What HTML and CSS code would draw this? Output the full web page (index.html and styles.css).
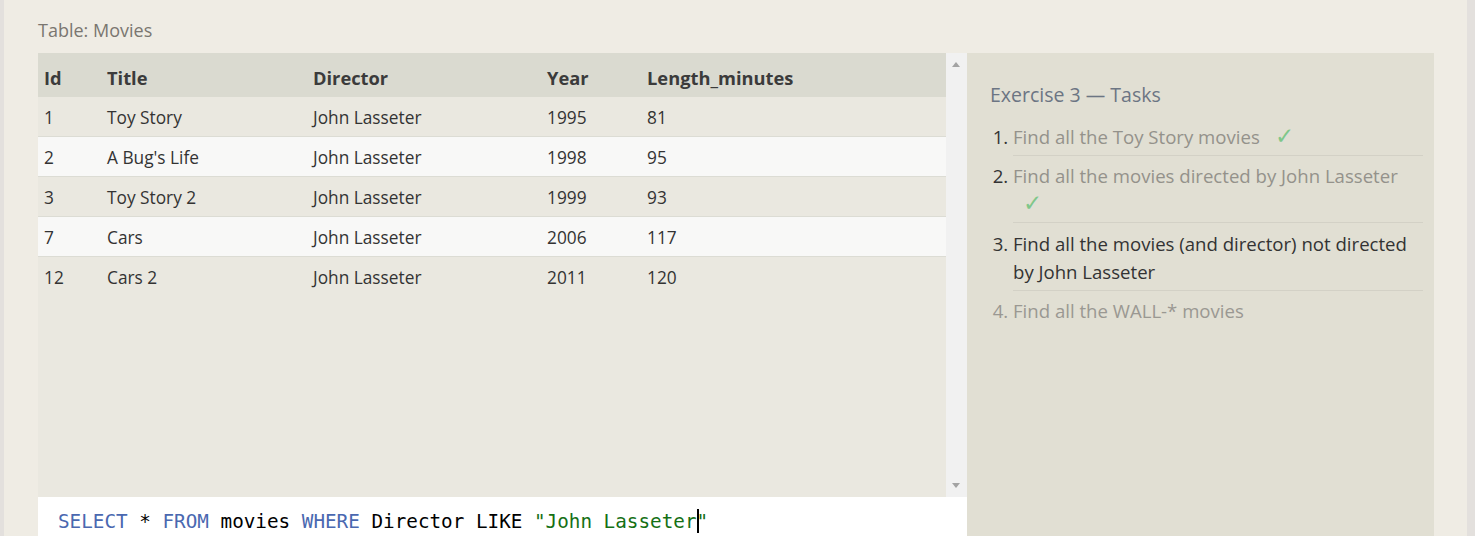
FILE: index.html
```html
<!DOCTYPE html>
<html>
<head>
<meta charset="utf-8">
<link rel="stylesheet" href="styles.css">
</head>
<body>
<div class="page">
  <div class="caption">Table: Movies</div>
  <div class="workspace">
    <div class="left">
      <div class="results">
        <div class="table-area">
          <table class="grid">
            <colgroup>
              <col class="c-id"><col class="c-title"><col class="c-dir"><col class="c-year"><col>
            </colgroup>
            <thead>
              <tr><th>Id</th><th>Title</th><th>Director</th><th>Year</th><th>Length_minutes</th></tr>
            </thead>
            <tbody>
              <tr><td>1</td><td>Toy Story</td><td>John Lasseter</td><td>1995</td><td>81</td></tr>
              <tr><td>2</td><td>A Bug's Life</td><td>John Lasseter</td><td>1998</td><td>95</td></tr>
              <tr><td>3</td><td>Toy Story 2</td><td>John Lasseter</td><td>1999</td><td>93</td></tr>
              <tr><td>7</td><td>Cars</td><td>John Lasseter</td><td>2006</td><td>117</td></tr>
              <tr><td>12</td><td>Cars 2</td><td>John Lasseter</td><td>2011</td><td>120</td></tr>
            </tbody>
          </table>
        </div>
        <div class="scrollbar">
          <span class="arrow up"></span>
          <span class="arrow down"></span>
        </div>
      </div>
      <div class="editor"><span class="kw">SELECT</span> * <span class="kw">FROM</span> movies <span class="kw">WHERE</span> Director LIKE <span class="str">"John Lasseter<span class="caret"></span>"</span></div>
    </div>
    <div class="tasks">
      <h2 class="tasks-title">Exercise 3 — Tasks</h2>
      <ol class="task-list">
        <li class="done"><span class="t">Find all the Toy Story movies</span> <span class="check">✓</span></li>
        <li class="done"><span class="t">Find all the movies directed by John Lasseter</span> <span class="check">✓</span></li>
        <li class="current">Find all the movies (and director) not directed by John Lasseter</li>
        <li class="todo">Find all the WALL-* movies</li>
      </ol>
    </div>
  </div>
</div>
</body>
</html>
```

FILE: styles.css
```css
html, body {
  margin: 0;
  padding: 0;
  height: 100%;
}
body {
  background: #efece4;
  border-left: 4px solid #e3e0dd;
  border-right: 8px solid #e3e0dd;
  box-sizing: border-box;
  font-family: "Open Sans", "Noto Sans", sans-serif;
  overflow: hidden;
}
.page {
  padding: 17px 33px 0 34px;
}
.caption {
  font-size: 18px;
  line-height: 24px;
  color: #7a7670;
  padding-top: 1px;
  margin-bottom: 11px;
}
.workspace {
  display: flex;
  align-items: flex-start;
}
.left {
  width: 929px;
  display: flex;
  flex-direction: column;
}
.results {
  display: flex;
  height: 444px;
}
.table-area {
  flex: 1;
  background: #eae8e0;
}
.scrollbar {
  width: 21px;
  background: #f1f1f1;
  position: relative;
}
.arrow {
  position: absolute;
  left: 6px;
  width: 0;
  height: 0;
  border-left: 4px solid transparent;
  border-right: 4px solid transparent;
}
.arrow.up {
  top: 9px;
  border-bottom: 5px solid #a3a3a3;
}
.arrow.down {
  bottom: 9px;
  border-top: 5px solid #a3a3a3;
}
.grid {
  width: 100%;
  border-collapse: collapse;
  font-size: 17.3px;
  color: #333;
}
.c-id { width: 63px; }
.c-title { width: 206px; }
.c-dir { width: 234px; }
.c-year { width: 100px; }
.grid th {
  background: #dadad0;
  text-align: left;
  font-weight: 700;
  font-size: 18.3px;
  height: 40px;
  padding: 4px 6px 0;
  color: #3b3b3b;
}
.grid td {
  height: 37px;
  padding: 2px 6px 0;
  border-bottom: 1px solid #dcdcd4;
}
.grid tbody tr:nth-child(odd) td { background: #eae8e0; }
.grid tbody tr:nth-child(even) td { background: #f8f8f7; }
.grid tbody tr:last-child td { border-bottom: none; }
.editor {
  background: #fff;
  height: 40px;
  padding: 12px 20px 0;
  font-family: "DejaVu Sans Mono", "Liberation Mono", monospace;
  font-size: 19.3px;
  line-height: 26px;
  color: #000;
  white-space: pre;
}
.kw { color: #4a68b0; }
.str { color: #157015; }
.caret {
  display: inline-block;
  width: 2px;
  height: 24px;
  background: #000;
  vertical-align: -5px;
  margin-right: -2px;
}
.tasks {
  width: 467px;
  height: 483px;
  background: #e1dfd3;
  box-sizing: border-box;
  padding: 29px 11px 0 23px;
}
.tasks-title {
  margin: 0 0 9px;
  font-weight: 400;
  font-size: 19.5px;
  line-height: 26px;
  color: #6c7583;
}
.task-list {
  margin: 0;
  padding: 0 0 0 23px;
  font-size: 18.6px;
  line-height: 28px;
  color: #333;
}
.task-list li {
  padding: 6px 0 4px;
  border-bottom: 1px solid #d3d1c6;
}
.task-list li.current { padding-top: 7px; }
.task-list li:last-child { border-bottom: none; }
.task-list .done .t { color: #94928b; }
.task-list .todo { color: #9a9892; }
.check {
  display: inline-block;
  margin-left: 10px;
  color: #7fc78a;
  font-size: 23px;
  line-height: 20px;
}
```
